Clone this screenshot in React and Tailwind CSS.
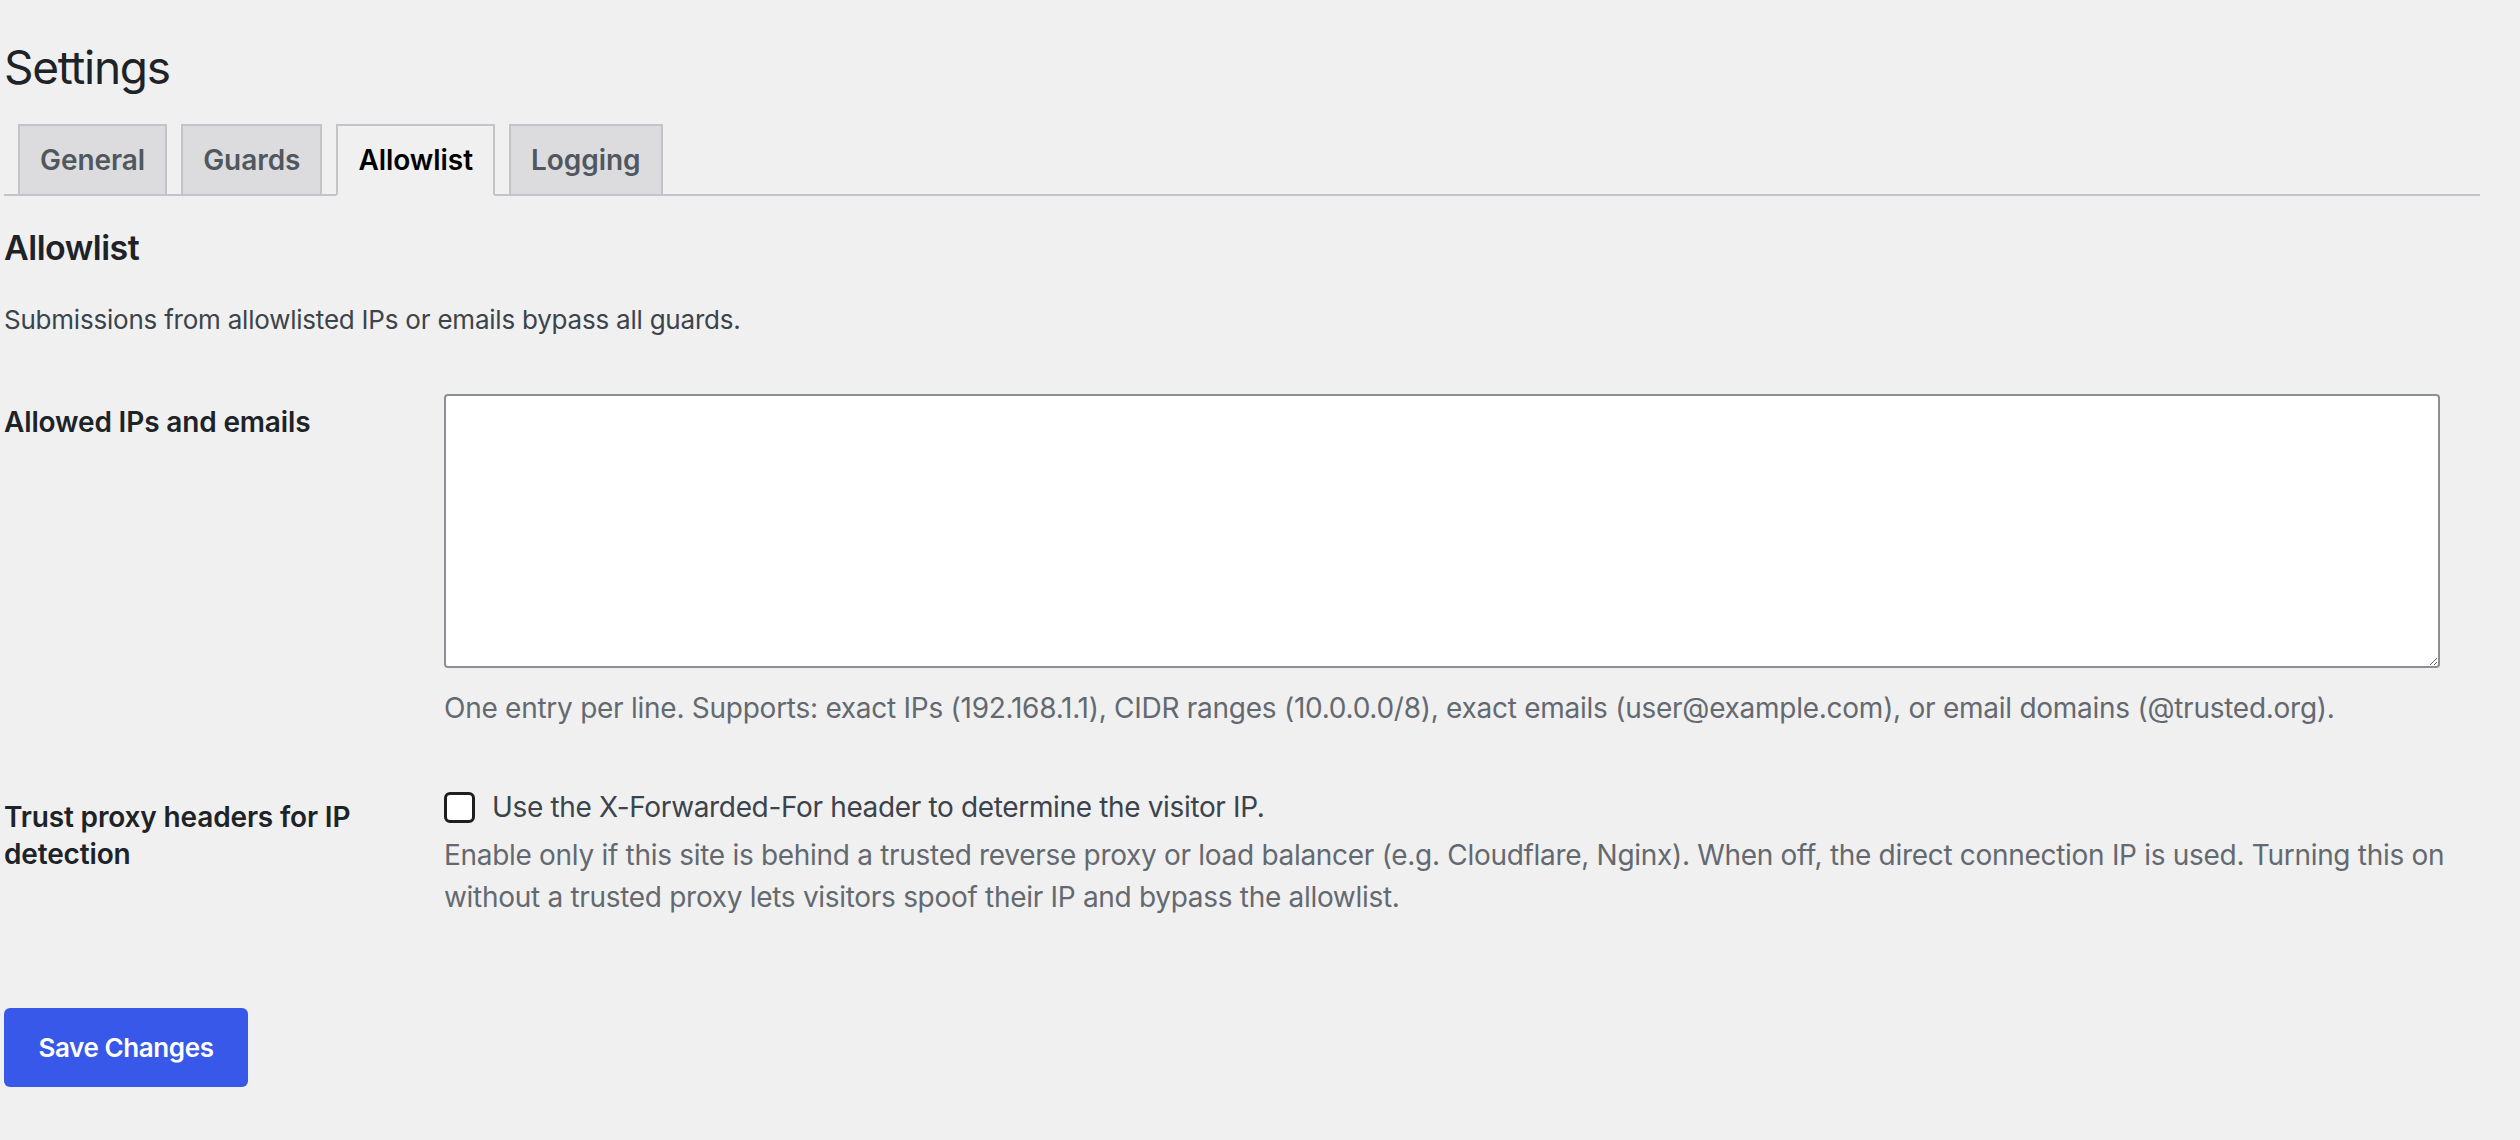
import React from "react";

const tabs = ["General", "Guards", "Allowlist", "Logging"];

export default function App() {
  return (
    <div className="min-h-screen w-full bg-[#f0f0f1] font-['Inter','Noto_Sans',sans-serif] text-[#3c434a]">
      <div className="ml-[4px] mr-[40px] pt-[20px]">
        <h1 className="pt-[18px] pb-[8px] text-[46px] leading-[59.8px] font-normal tracking-[-1.3px] text-[#1d2327]">
          Settings
        </h1>
        <nav className="flex items-end pt-[18px] border-b-2 border-[#c3c4c7]">
          {tabs.map((t) => {
            const active = t === "Allowlist";
            return (
              <a
                key={t}
                className={
                  active
                    ? "ml-[14px] -mb-[2px] border-2 border-[#c3c4c7] border-b-[#f0f0f1] bg-[#f0f0f1] px-[20px] pt-[10px] pb-[10px] text-[28px] leading-[48px] font-semibold tracking-[-0.05px] text-black"
                    : "ml-[14px] border-2 border-b-0 border-[#c3c4c7] bg-[#dcdcde] px-[20px] pt-[10px] pb-[10px] text-[28px] leading-[48px] font-semibold tracking-[-0.05px] text-[#50575e]"
                }
              >
                {t}
              </a>
            );
          })}
        </nav>

        <h2 className="mt-[34px] text-[34px] leading-[36.4px] font-semibold tracking-[-0.5px] text-[#1d2327]">
          Allowlist
        </h2>
        <p className="mt-[34px] text-[26px] leading-[39px] tracking-[-0.22px] text-[#3c434a]">
          Submissions from allowlisted IPs or emails bypass all guards.
        </p>

        <div className="mt-[25px]">
          <div className="flex items-start">
            <div className="w-[420px] shrink-0 pt-[40px] pb-[40px] pr-[20px] text-[28px] leading-[36.4px] font-semibold tracking-[-0.15px] text-[#1d2327]">
              Allowed IPs and emails
            </div>
            <div className="flex-1 px-[20px] py-[30px]">
              <textarea className="block w-[99%] h-[274px] rounded-[4px] border-2 border-[#8c8f94] bg-white" />
              <p className="mt-[19px] text-[28px] leading-[42px] tracking-[-0.26px] text-[#646970]">
                One entry per line. Supports: exact IPs (192.168.1.1), CIDR ranges (10.0.0.0/8), exact emails (user@example.com), or email domains (@trusted.org).
              </p>
            </div>
          </div>

          <div className="flex items-start">
            <div className="w-[420px] shrink-0 pt-[40px] pb-[40px] pr-[20px] text-[28px] leading-[36.4px] font-semibold tracking-[-0.15px] text-[#1d2327]">
              Trust proxy headers for IP detection
            </div>
            <div className="flex-1 px-[20px] py-[30px]">
              <label className="flex items-center gap-[17px] text-[28px] leading-[36.4px] tracking-[-0.35px] text-[#3c434a]">
                <span className="block h-[31px] w-[31px] shrink-0 rounded-[6px] border-[3px] border-[#1e1e1e] bg-white" />
                <span>Use the X-Forwarded-For header to determine the visitor IP.</span>
              </label>
              <p className="mt-[8px] text-[28px] leading-[42px] tracking-[-0.3px] text-[#646970]">
                Enable only if this site is behind a trusted reverse proxy or load balancer (e.g. Cloudflare, Nginx). When off, the direct connection IP is used. Turning this on without a trusted proxy lets visitors spoof their IP and bypass the allowlist.
              </p>
            </div>
          </div>
        </div>

        <div className="mt-[40px] pt-[20px]">
          <button className="h-[79px] w-[244px] rounded-[6px] bg-[#3858e9] text-[26px] font-semibold tracking-[-0.4px] text-white">
            Save Changes
          </button>
        </div>
      </div>
    </div>
  );
}
